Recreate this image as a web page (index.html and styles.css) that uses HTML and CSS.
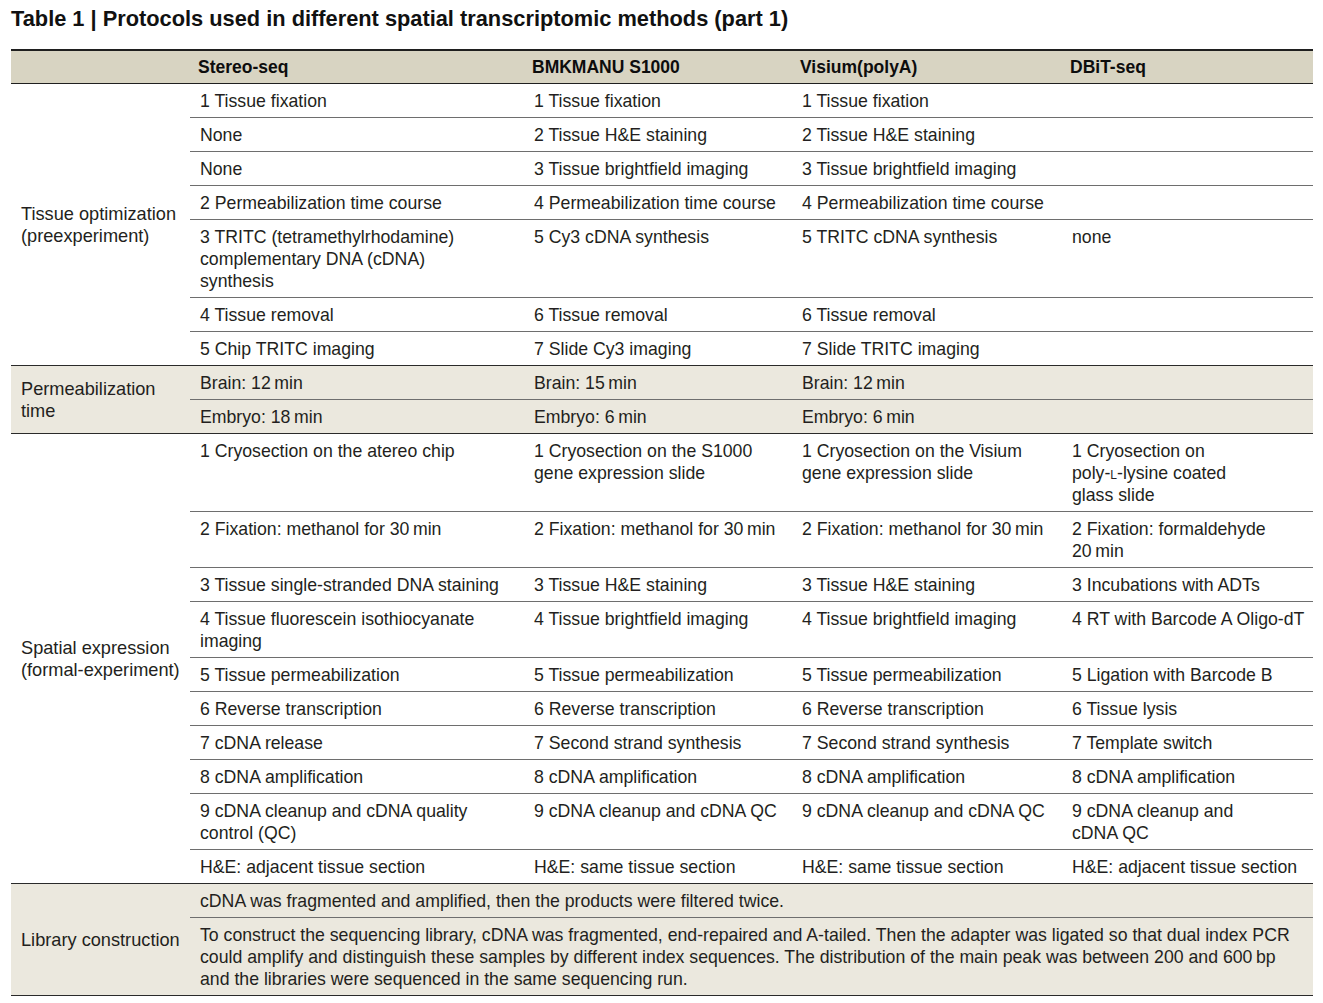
FILE: index.html
```html
<!DOCTYPE html>
<html lang="en">
<head>
<meta charset="utf-8">
<title>Table 1</title>
<link rel="stylesheet" href="styles.css">
</head>
<body>
<h1 class="title">Table 1 | Protocols used in different spatial transcriptomic methods (part 1)</h1>
<table class="proto">
  <colgroup>
    <col class="c-label"><col class="c-stereo"><col class="c-bmk"><col class="c-visium"><col class="c-dbit">
  </colgroup>
  <thead>
    <tr><th></th><th>Stereo-seq</th><th>BMKMANU S1000</th><th>Visium(polyA)</th><th>DBiT-seq</th></tr>
  </thead>
  <tbody class="grp">
    <tr><td class="label" rowspan="7">Tissue optimization<br>(preexperiment)</td><td>1 Tissue fixation</td><td>1 Tissue fixation</td><td>1 Tissue fixation</td><td></td></tr>
    <tr><td>None</td><td>2 Tissue H&amp;E staining</td><td>2 Tissue H&amp;E staining</td><td></td></tr>
    <tr><td>None</td><td>3 Tissue brightfield imaging</td><td>3 Tissue brightfield imaging</td><td></td></tr>
    <tr><td>2 Permeabilization time course</td><td>4 Permeabilization time course</td><td>4 Permeabilization time course</td><td></td></tr>
    <tr><td>3 TRITC (tetramethylrhodamine)<br>complementary DNA (cDNA)<br>synthesis</td><td>5 Cy3 cDNA synthesis</td><td>5 TRITC cDNA synthesis</td><td>none</td></tr>
    <tr><td>4 Tissue removal</td><td>6 Tissue removal</td><td>6 Tissue removal</td><td></td></tr>
    <tr class="last"><td>5 Chip TRITC imaging</td><td>7 Slide Cy3 imaging</td><td>7 Slide TRITC imaging</td><td></td></tr>
  </tbody>
  <tbody class="grp band">
    <tr><td class="label" rowspan="2">Permeabilization<br>time</td><td>Brain: 12&thinsp;min</td><td>Brain: 15&thinsp;min</td><td>Brain: 12&thinsp;min</td><td></td></tr>
    <tr class="last"><td>Embryo: 18&thinsp;min</td><td>Embryo: 6&thinsp;min</td><td>Embryo: 6&thinsp;min</td><td></td></tr>
  </tbody>
  <tbody class="grp">
    <tr><td class="label" rowspan="11">Spatial expression<br>(formal-experiment)</td><td>1 Cryosection on the atereo chip</td><td>1 Cryosection on the S1000<br>gene expression slide</td><td>1 Cryosection on the Visium<br>gene expression slide</td><td>1 Cryosection on<br>poly-<span class="sc">l</span>-lysine coated<br>glass slide</td></tr>
    <tr><td>2 Fixation: methanol for 30&thinsp;min</td><td>2 Fixation: methanol for 30&thinsp;min</td><td>2 Fixation: methanol for 30&thinsp;min</td><td>2 Fixation: formaldehyde<br>20&thinsp;min</td></tr>
    <tr><td>3 Tissue single-stranded DNA staining</td><td>3 Tissue H&amp;E staining</td><td>3 Tissue H&amp;E staining</td><td>3 Incubations with ADTs</td></tr>
    <tr><td>4 Tissue fluorescein isothiocyanate<br>imaging</td><td>4 Tissue brightfield imaging</td><td>4 Tissue brightfield imaging</td><td>4 RT with Barcode A Oligo-dT</td></tr>
    <tr><td>5 Tissue permeabilization</td><td>5 Tissue permeabilization</td><td>5 Tissue permeabilization</td><td>5 Ligation with Barcode B</td></tr>
    <tr><td>6 Reverse transcription</td><td>6 Reverse transcription</td><td>6 Reverse transcription</td><td>6 Tissue lysis</td></tr>
    <tr><td>7 cDNA release</td><td>7 Second strand synthesis</td><td>7 Second strand synthesis</td><td>7 Template switch</td></tr>
    <tr><td>8 cDNA amplification</td><td>8 cDNA amplification</td><td>8 cDNA amplification</td><td>8 cDNA amplification</td></tr>
    <tr><td>9 cDNA cleanup and cDNA quality<br>control (QC)</td><td>9 cDNA cleanup and cDNA QC</td><td>9 cDNA cleanup and cDNA QC</td><td>9 cDNA cleanup and<br>cDNA QC</td></tr>
    <tr class="last"><td>H&amp;E: adjacent tissue section</td><td>H&amp;E: same tissue section</td><td>H&amp;E: same tissue section</td><td>H&amp;E: adjacent tissue section</td></tr>
  </tbody>
  <tbody class="grp band">
    <tr><td class="label" rowspan="2">Library construction</td><td colspan="4">cDNA was fragmented and amplified, then the products were filtered twice.</td></tr>
    <tr class="last"><td colspan="4">To construct the sequencing library, cDNA was fragmented, end-repaired and A-tailed. Then the adapter was ligated so that dual index PCR<br>could amplify and distinguish these samples by different index sequences. The distribution of the main peak was between 200 and 600&thinsp;bp<br>and the libraries were sequenced in the same sequencing run.</td></tr>
  </tbody>
</table>
</body>
</html>
```
FILE: styles.css
```css
html, body {
  margin: 0;
  padding: 0;
  background: #ffffff;
}
body {
  padding: 0 10px 0 11px;
  font-family: "Liberation Sans", Arial, sans-serif;
  color: #231f20;
}
.title {
  margin: 0;
  padding: 5px 0 16px;
  font-size: 21.8px;
  line-height: 28px;
  font-weight: bold;
  color: #111;
}
.proto {
  width: 1302px;
  border-collapse: collapse;
  table-layout: fixed;
  font-size: 17.7px;
  line-height: 22px;
}
.c-label { width: 179px; }
.c-stereo { width: 334px; }
.c-bmk { width: 268px; }
.c-visium { width: 270px; }
.c-dbit { width: 251px; }

.proto th {
  background: #d8d4c2;
  border-top: 2px solid #1f1f1f;
  border-bottom: 1px solid #1f1f1f;
  height: 32px;
  padding: 0 8px;
  text-align: left;
  font-weight: bold;
  font-size: 17.5px;
  color: #0d0d0d;
  vertical-align: middle;
}
.proto td {
  padding: 6px 4px 5px 10px;
  vertical-align: top;
  border-bottom: 1px solid #6e6e6e;
  text-align: left;
}
.proto td.label {
  vertical-align: middle;
  border-bottom: 1px solid #2a2a2a;
  font-size: 18.2px;
  padding-right: 2px;
}
.proto tr.last td {
  border-bottom: 1px solid #2a2a2a;
}
.band td {
  background: #ebe8de;
}
.sc {
  font-variant: small-caps;
}
```
